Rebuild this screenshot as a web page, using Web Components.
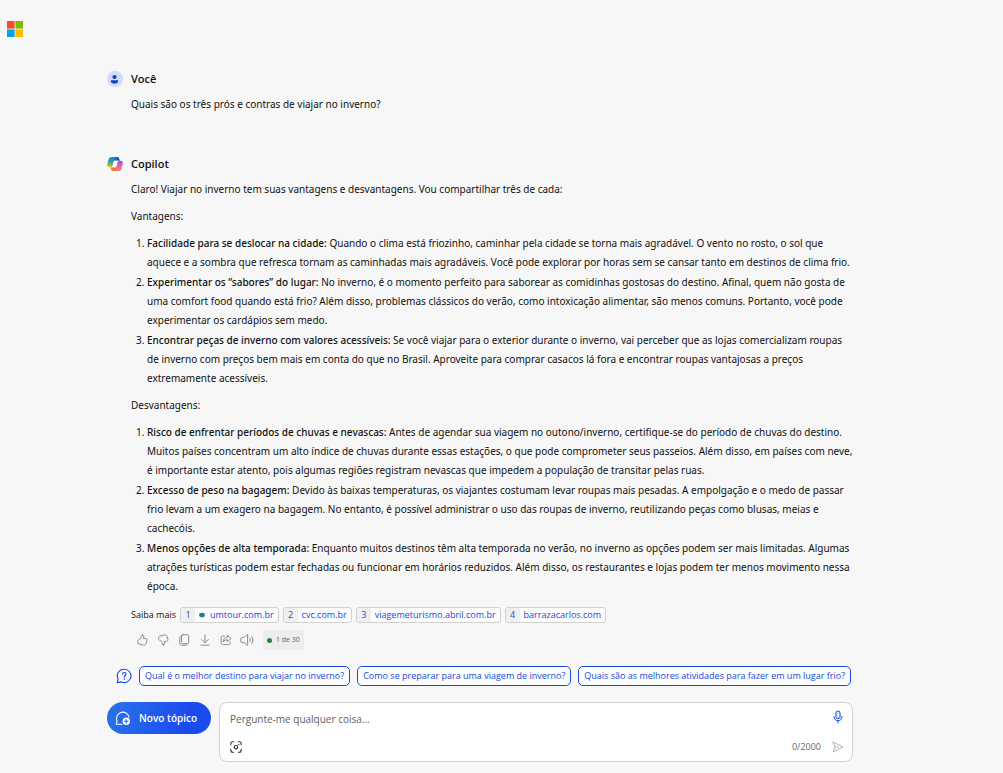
<!DOCTYPE html>
<html lang="pt-BR">
<head>
<meta charset="utf-8">
<meta name="viewport" content="width=device-width, initial-scale=1">
<title>Copilot</title>
<style>
body{margin:0;background:#f7f7f7;color:#111;font:10px/19px "Noto Sans","Open Sans",sans-serif}
</style>
</head>
<body>
<chat-page></chat-page>

<template id="t-page">
<style>
:host{display:block}
header{padding:21px 7px 0}
main{max-width:746px;margin:0 auto;padding:32px 43px 11px 0;display:flex;flex-direction:column}
.turns{display:flex;flex-direction:column;gap:40px}
</style>
<header><ui-icon name="microsoft"></ui-icon></header>
<main>
<div class="turns">
<chat-turn><ui-icon slot="avatar" name="user"></ui-icon><span slot="name">Você</span><chat-question>Quais são os três prós e contras de viajar no inverno?</chat-question></chat-turn>
<chat-turn><ui-icon slot="avatar" name="copilot"></ui-icon><span slot="name">Copilot</span><chat-answer></chat-answer></chat-turn>
</div>
<chat-suggestions></chat-suggestions>
<chat-composer></chat-composer>
</main>
</template>

<template id="t-turn">
<style>
:host{display:grid;grid-template-columns:16px minmax(0,1fr);column-gap:8px;row-gap:7px;align-items:center}
h2{margin:0;font:600 11px/19px "Open Sans","Noto Sans",sans-serif;color:#111}
.body{grid-column:2}
</style>
<slot name="avatar"></slot><h2><slot name="name"></slot></h2><div class="body"><slot></slot></div>
</template>

<template id="t-question">
<style>:host{display:block}p{margin:0}</style>
<p><slot></slot></p>
</template>

<template id="t-answer">
<style>
:host{display:block}
p{margin:0 0 8px}
ol{margin:0 0 8px;padding-left:16px;display:flex;flex-direction:column;gap:1px}
strong{font-weight:500}
ol:last-of-type{margin-bottom:11px}
.sources{display:flex;flex-wrap:wrap;align-items:center;gap:4px;font:9px/14px "Open Sans","Noto Sans",sans-serif}
</style>
<p>Claro! Viajar no inverno tem suas vantagens e desvantagens. Vou compartilhar três de cada:</p>
<p>Vantagens:</p>
<ol>
<li><strong>Facilidade para se deslocar na cidade:</strong> Quando o clima está friozinho, caminhar pela cidade se torna mais agradável. O vento no rosto, o sol que aquece e a sombra que refresca tornam as caminhadas mais agradáveis. Você pode explorar por horas sem se cansar tanto em destinos de clima frio.</li>
<li><strong>Experimentar os “sabores” do lugar:</strong> No inverno, é o momento perfeito para saborear as comidinhas gostosas do destino. Afinal, quem não gosta de uma comfort food quando está frio? Além disso, problemas clássicos do verão, como intoxicação alimentar, são menos comuns. Portanto, você pode experimentar os cardápios sem medo.</li>
<li><strong>Encontrar peças de inverno com valores acessíveis:</strong> Se você viajar para o exterior durante o inverno, vai perceber que as lojas comercializam roupas de inverno com preços bem mais em conta do que no Brasil. Aproveite para comprar casacos lá fora e encontrar roupas vantajosas a preços extremamente acessíveis.</li>
</ol>
<p>Desvantagens:</p>
<ol>
<li><strong>Risco de enfrentar períodos de chuvas e nevascas:</strong> Antes de agendar sua viagem no outono/inverno, certifique-se do período de chuvas do destino. Muitos países concentram um alto índice de chuvas durante essas estações, o que pode comprometer seus passeios. Além disso, em países com neve, é importante estar atento, pois algumas regiões registram nevascas que impedem a população de transitar pelas ruas.</li>
<li><strong>Excesso de peso na bagagem:</strong> Devido às baixas temperaturas, os viajantes costumam levar roupas mais pesadas. A empolgação e o medo de passar frio levam a um exagero na bagagem. No entanto, é possível administrar o uso das roupas de inverno, reutilizando peças como blusas, meias e cachecóis.</li>
<li><strong>Menos opções de alta temporada:</strong> Enquanto muitos destinos têm alta temporada no verão, no inverno as opções podem ser mais limitadas. Algumas atrações turísticas podem estar fechadas ou funcionar em horários reduzidos. Além disso, os restaurantes e lojas podem ter menos movimento nessa época.</li>
</ol>
<div class="sources"><span>Saiba mais</span>
<source-chip number="1" href="#umtour"><ui-icon slot="icon" name="globe"></ui-icon>umtour.com.br</source-chip>
<source-chip number="2" href="#cvc">cvc.com.br</source-chip>
<source-chip number="3" href="#viagemeturismo">viagemeturismo.abril.com.br</source-chip>
<source-chip number="4" href="#barrazacarlos">barrazacarlos.com</source-chip>
</div>
<answer-actions></answer-actions>
</template>

<template id="t-source">
<style>
:host{display:block}
a{display:flex;box-sizing:border-box;height:16px;border:1px solid #d1d1d1;border-radius:3px;overflow:hidden;background:#fcfcfc;color:#174ae4;text-decoration:none;white-space:nowrap}
.num{width:14px;text-align:center;background:#efefef}
.label{display:flex;align-items:center;gap:5px;padding:0 4px}
</style>
<a><span class="num"></span><span class="label"><slot name="icon"></slot><slot></slot></span></a>
</template>

<template id="t-actions">
<style>
:host{display:flex;align-items:center;margin-top:7px;padding-left:3px;gap:5px;color:#808080}
button{all:unset;display:grid;place-items:center;width:16px;height:20px;cursor:pointer}
.count{display:flex;align-items:center;gap:4px;height:20px;margin-left:3px;padding:0 4px;border-radius:3px;background:#ededed;color:#666;font:7px/20px "Open Sans","Noto Sans",sans-serif}
.count i{width:5px;height:5px;border-radius:50%;background:#2a8144}
</style>
<button aria-label="Gostei"><ui-icon name="like"></ui-icon></button>
<button aria-label="Não gostei"><ui-icon name="dislike"></ui-icon></button>
<button aria-label="Copiar"><ui-icon name="copy"></ui-icon></button>
<button aria-label="Exportar"><ui-icon name="download"></ui-icon></button>
<button aria-label="Compartilhar"><ui-icon name="share"></ui-icon></button>
<button aria-label="Ler em voz alta"><ui-icon name="sound"></ui-icon></button>
<span class="count"><i></i>1 de 30</span>
</template>

<template id="t-suggestions">
<style>
:host{display:flex;align-items:center;gap:7px;margin-top:16px;padding-left:9px;color:#174ae4}
button{box-sizing:border-box;height:20px;border:1px solid #174ae4;border-radius:5px;background:#fcfcfc;color:#174ae4;font:9px/18px "Open Sans","Noto Sans",sans-serif;padding:0 5px;white-space:nowrap;cursor:pointer}
</style>
<ui-icon name="help"></ui-icon>
<button>Qual é o melhor destino para viajar no inverno?</button>
<button>Como se preparar para uma viagem de inverno?</button>
<button>Quais são as melhores atividades para fazer em um lugar frio?</button>
</template>

<template id="t-composer">
<style>
:host{display:flex;align-items:flex-start;gap:8px;margin-top:16px}
button{all:unset;cursor:pointer;display:flex;align-items:center}
.new{box-sizing:border-box;flex:none;width:104px;height:32px;padding-left:8px;gap:8px;border-radius:16px;background:linear-gradient(110deg,#2870ea 10%,#1b4aef 75%);color:#fff;font:600 10px/19px "Open Sans","Noto Sans",sans-serif}
form{box-sizing:border-box;flex:1;min-width:0;height:60px;border:1px solid #d1d1d1;border-radius:8px;background:#fff;padding:7px 8px 5px 10px;display:flex;flex-direction:column;justify-content:space-between}
.row{display:flex;align-items:center;gap:8px}
textarea{flex:1;min-width:0;height:19px;border:0;padding:0;margin:0;resize:none;outline:0;overflow:hidden;background:none;color:#111;font:10px/19px "Open Sans","Noto Sans",sans-serif}
textarea::placeholder{color:#616161;opacity:1}
.count{margin:0 3px 0 auto;font:9px/19px "Open Sans","Noto Sans",sans-serif;color:#666}
.image{color:#333}.mic{color:#174ae4;align-self:flex-start}.send{color:#a8a8a8}
</style>
<button class="new"><ui-icon name="newtopic"></ui-icon>Novo tópico</button>
<form>
<div class="row"><textarea aria-label="Pergunte-me qualquer coisa" placeholder="Pergunte-me qualquer coisa..."></textarea><button type="button" class="mic" aria-label="Usar microfone"><ui-icon name="mic"></ui-icon></button></div>
<div class="row"><button type="button" class="image" aria-label="Adicionar imagem"><ui-icon name="capture"></ui-icon></button><span class="count">0/2000</span><button type="button" class="send" aria-label="Enviar"><ui-icon name="send"></ui-icon></button></div>
</form>
</template>

<script>
const line = 'fill="none" stroke="currentColor" stroke-linecap="round" stroke-linejoin="round"';
const ICONS = {
  microsoft: [16, 16, '<path fill="#f25022" d="M0 0h7.6v7.6H0z"/><path fill="#7fba00" d="M8.4 0H16v7.6H8.4z"/><path fill="#00a4ef" d="M0 8.4h7.6V16H0z"/><path fill="#ffb900" d="M8.4 8.4H16V16H8.4z"/>'],
  user: [16, 16, '<circle cx="8" cy="8" r="8" fill="#d0dcfb"/><circle cx="7.5" cy="6" r="2.1" fill="#1440b8"/><path d="M4 9.2h7v1c0 1.4-1.4 2.3-3.5 2.3S4 11.6 4 10.2z" fill="#1440b8"/>'],
  copilot: [16, 16, `<defs>
    <linearGradient id="a" x1=".4" y1="0" x2=".3" y2="1"><stop offset="0" stop-color="#1292d2"/><stop offset=".4" stop-color="#1f9fb4"/><stop offset=".7" stop-color="#7fb84a"/><stop offset="1" stop-color="#f2c81c"/></linearGradient>
    <linearGradient id="b" x1=".6" y1="0" x2=".3" y2="1"><stop offset="0" stop-color="#a94fe0"/><stop offset=".5" stop-color="#e8689c"/><stop offset="1" stop-color="#f78a4c"/></linearGradient>
    <linearGradient id="c" x1="0" y1="0" x2="1" y2="0"><stop offset="0" stop-color="#1484cf"/><stop offset="1" stop-color="#1b46b8"/></linearGradient>
    <linearGradient id="d" x1="0" y1="0" x2="1" y2="0"><stop offset="0" stop-color="#f2a13c"/><stop offset="1" stop-color="#ee4f3b"/></linearGradient></defs>
    <path fill="url(#c)" d="M5 1h5.300c1 0 1.600.7 1.800 1.500l.7 2.300H7z"/>
    <path fill="url(#d)" d="M11 15H5.800c-1 0-1.700-.6-1.900-1.500l-.6-2.300H9z"/>
    <path fill="url(#a)" d="M4.700 1h4.200c-.8.200-1.200.9-1.500 1.800L5.500 9.600c-.3 1-.9 1.600-1.900 1.600H2.200C.7 11.200-.1 10 .2 8.500l1.500-5.400C2.100 1.700 3.200 1 4.700 1z"/>
    <path fill="url(#b)" d="M11.300 15H7.100c.8-.2 1.200-.9 1.500-1.800l1.900-6.800c.3-1 .9-1.600 1.900-1.600h1.400c1.500 0 2.300 1.200 2 2.700l-1.500 5.400c-.4 1.400-1.500 2.100-3 2.100z"/>
    <path fill="#fff" d="M7.700 4.800h3.100c-.5.300-.8.800-1 1.500l-1.400 4.900H5.300c.5-.3.800-.8 1-1.500z"/>`],
  globe: [6, 6, '<ellipse cx="3" cy="3" rx="3" ry="2.3" fill="#2b8ca3"/><path d="M1.600 1.500h2.800L3 5.600z" fill="#17677c"/>'],
  like: [12, 12, `<path ${line} stroke-width=".9" d="M6.600.9c.9 0 1.300.8 1.200 1.600L7.500 4.600h1.800c1.200 0 1.900.9 1.600 2l-.8 2.900c-.4 1.300-1.300 1.900-2.600 1.600L2.900 9.900c-.7-.2-1-.6-1.100-1.300L1.500 7.500c-.1-.7.200-1.200.9-1.500C4.400 5.200 5.100 3.600 5.600 1.600c.1-.5.500-.7 1-.7z"/>`],
  dislike: [12, 12, `<path ${line} stroke-width=".9" d="M6.600 11.100c.9 0 1.300-.8 1.200-1.600L7.500 7.400h1.800c1.200 0 1.900-.9 1.600-2l-.8-2.900C9.700 1.200 8.800.6 7.500.9L2.900 2.100c-.7.200-1 .6-1.100 1.300l-.3 1.100c-.1.700.2 1.200.9 1.500 2 .8 2.700 2.400 3.200 4.400.1.500.5.700 1 .7z"/>`],
  copy: [12, 12, `<rect x="3.500" y=".7" width="7.200" height="9" rx="1.300" ${line} stroke-width=".9"/><path ${line} stroke-width=".9" d="M3.300 2C2.300 2.200 1.700 2.700 1.700 3.800v5c0 1.700.9 2.500 2.500 2.500h3.300c.9 0 1.500-.4 1.700-1.200"/>`],
  download: [12, 12, `<path ${line} stroke-width=".9" d="M6 .8v7.800M2.700 5.500 6 8.800l3.300-3.300M2 11.200h8"/>`],
  share: [12, 12, `<path ${line} stroke-width=".9" d="M4.500 2H3.200C1.900 2 1.200 2.700 1.200 4v4.600c0 1.300.7 2 2 2h5c1.300 0 2-.7 2-2v-.8M7.400 1.200l3.700 3.200-3.700 3.200V5.800c-2 0-3.200.6-4.200 2 .2-2.700 1.600-4.500 4.200-4.800z"/>`],
  sound: [14, 12, `<path ${line} stroke-width=".9" d="M7.600 1.200v9.600c0 .4-.4.500-.7.300L3.900 8.400H1.700c-.6 0-1-.4-1-1V4.600c0-.6.400-1 1-1h2.200L6.900.9c.3-.2.700-.1.700.3zM9.800 4.200c.8 1.100.8 2.500 0 3.600M11.800 2.600c1.700 2.100 1.700 4.700 0 6.800"/>`],
  help: [16, 16, `<path ${line} stroke-width="1.100" d="M8.300 1.200a6.700 6.700 0 1 1-3 12.700L1.200 14.600l.9-3.600A6.700 6.700 0 0 1 8.300 1.200z"/><path ${line} stroke-width="1.200" d="M6.600 6.200c0-1 .7-1.700 1.700-1.700s1.700.7 1.700 1.600c0 1.300-1.700 1.400-1.700 2.800"/><circle cx="8.300" cy="11" r=".8" fill="currentColor"/>`],
  newtopic: [16, 16, `<path ${line} stroke-width="1.100" d="M7 14.200H1.300l.8-3.100A6.300 6.300 0 1 1 14 7.200"/><circle cx="11.300" cy="11.300" r="3.700" fill="#fff"/><path fill="none" stroke="#2463ec" stroke-width="1.100" d="M11.300 9.200v4.200M9.200 11.300h4.200"/>`],
  capture: [12, 12, `<path ${line} stroke-width="1.100" d="M.8 3.600V2.800c0-1.200.8-2 2-2h.8M8.400.8h.8c1.200 0 2 .8 2 2v.8M11.200 8.400v.8c0 1.200-.8 2-2 2h-.8M3.600 11.200h-.8c-1.200 0-2-.8-2-2v-.8"/><circle cx="6" cy="6.200" r="1.700" ${line} stroke-width="1.100"/><circle cx="8.800" cy="3.600" r=".7" fill="currentColor"/>`],
  mic: [12, 14, `<rect x="3.900" y="1" width="4.200" height="7.800" rx="2.100" fill="#dfe7fd" stroke="currentColor"/><path ${line} d="M2 6.600c0 2.500 1.600 4.100 4 4.100s4-1.600 4-4.100M6 10.700V13"/>`],
  send: [12, 12, `<path ${line} stroke-width=".9" d="M1.200 1.100 11 6 1.200 10.900 2.700 6zM2.700 6H6.600"/>`]
};

const from = (id, setup) => class extends HTMLElement {
  connectedCallback() {
    if (this.shadowRoot) return;
    const root = this.attachShadow({ mode: 'open' });
    root.append(document.getElementById(id).content.cloneNode(true));
    if (setup) setup(this, root);
  }
};

customElements.define('ui-icon', class extends HTMLElement {
  connectedCallback() {
    if (this.shadowRoot) return;
    const [w, h, art] = ICONS[this.getAttribute('name')];
    this.attachShadow({ mode: 'open' }).innerHTML =
      `<style>:host{display:block;flex:none}svg{display:block}</style><svg width="${w}" height="${h}" viewBox="0 0 ${w} ${h}" aria-hidden="true">${art}</svg>`;
  }
});
customElements.define('source-chip', from('t-source', (el, root) => {
  root.querySelector('a').href = el.getAttribute('href');
  root.querySelector('.num').textContent = el.getAttribute('number');
}));
customElements.define('answer-actions', from('t-actions'));
customElements.define('chat-answer', from('t-answer'));
customElements.define('chat-question', from('t-question'));
customElements.define('chat-turn', from('t-turn'));
customElements.define('chat-suggestions', from('t-suggestions'));
customElements.define('chat-composer', from('t-composer'));
customElements.define('chat-page', from('t-page'));
</script>
</body>
</html>
